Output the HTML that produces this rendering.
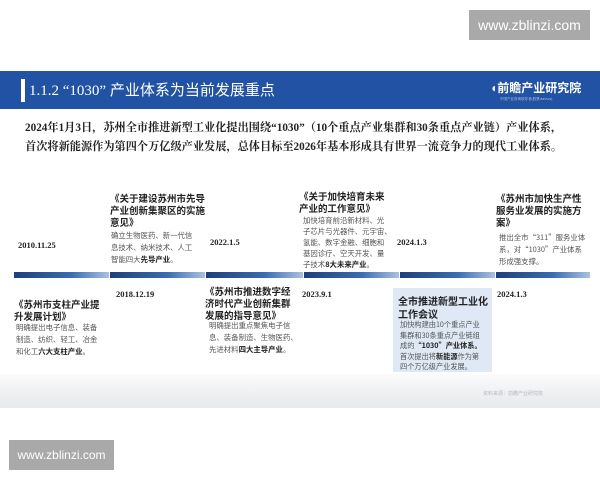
<!DOCTYPE html>
<html><head><meta charset="utf-8"><style>
body{margin:0;width:600px;height:480px;background:#fff;position:relative;overflow:hidden;font-family:"Liberation Serif","Noto Serif CJK SC","Noto Sans CJK SC",serif;color:#222}
.a{position:absolute;white-space:nowrap}
.wm{background:#a9a9a9;color:#fff;font-family:"Liberation Sans",sans-serif;font-size:14px;text-align:center;line-height:30px}
.hd{left:0;top:71px;width:600px;height:38px;background:#2152a3}
.t{font-size:9.5px;font-weight:bold;line-height:12px;font-family:"Noto Sans CJK SC",sans-serif;color:#222}
.d{font-size:7.4px;line-height:12px;color:#555;font-family:"Noto Sans CJK SC",sans-serif}
.d b{color:#222}
.dt{font-size:8.5px;font-weight:bold;color:#222}
.bar{top:272px;height:6px;background:linear-gradient(90deg,#1f3f7a,#3a6bb0 60%,#a8c2e2)}
</style></head><body>
<div class="a wm" style="left:469px;top:10px;width:121px;height:30px">www.zblinzi.com</div>
<div class="a hd"></div>
<div class="a" style="left:21px;top:79px;width:4px;height:23px;background:#fff"></div>
<div class="a" style="left:29px;top:80px;color:#fff;font-size:15px;line-height:22px;font-family:'Liberation Serif','Noto Sans CJK SC',serif">1.1.2 “1030” 产业体系为当前发展重点</div>
<div class="a" style="left:490px;top:80px;color:#fff;font-size:12px;font-weight:bold;font-family:'Noto Sans CJK SC',sans-serif;line-height:16px">◖前瞻产业研究院</div>
<div class="a" style="left:500px;top:97px;color:#cdd8ee;font-size:3.5px;">中国产业咨询领导者(股票:835519)</div>
<div class="a" style="left:25px;top:119px;font-size:11.2px;font-weight:bold;line-height:19px;font-family:'Liberation Serif','Noto Serif CJK SC',serif;color:#222">2024年1月3日，苏州全市推进新型工业化提出围绕“1030”（10个重点产业集群和30条重点产业链）产业体系，<br>首次将新能源作为第四个万亿级产业发展，总体目标至2026年基本形成具有世界一流竞争力的现代工业体系。</div>

<div class="a bar" style="left:14px;width:95px"></div>
<div class="a bar" style="left:110px;width:95px"></div>
<div class="a bar" style="left:206px;width:97px"></div>
<div class="a bar" style="left:304px;width:95px"></div>
<div class="a bar" style="left:400px;width:95px"></div>
<div class="a bar" style="left:496px;width:94px"></div>

<div class="a dt" style="left:18px;top:240px">2010.11.25</div>
<div class="a t" style="left:110px;top:192px">《关于建设苏州市先导<br>产业创新集聚区的实施<br>意见》</div>
<div class="a d" style="left:111px;top:230px">确立生物医药、新一代信<br>息技术、纳米技术、人工<br>智能四大<b>先导产业</b>。</div>
<div class="a dt" style="left:210px;top:237px">2022.1.5</div>
<div class="a t" style="left:299px;top:190px">《关于加快培育未来<br>产业的工作意见》</div>
<div class="a d" style="left:303px;top:215px;line-height:11px">加快培育前沿新材料、光<br>子芯片与光器件、元宇宙、<br>氢能、数字金融、细胞和<br>基因诊疗、空天开发、量<br>子技术<b>8大未来产业</b>。</div>
<div class="a dt" style="left:397px;top:237px">2024.1.3</div>
<div class="a t" style="left:496px;top:192px">《苏州市加快生产性<br>服务业发展的实施方<br>案》</div>
<div class="a d" style="left:499px;top:232px">推出全市“311”服务业体<br>系，对“1030”产业体系<br>形成强支撑。</div>

<div class="a t" style="left:14px;top:298px">《苏州市支柱产业提<br>升发展计划》</div>
<div class="a d" style="left:16px;top:322px">明确提出电子信息、装备<br>制造、纺织、轻工、冶金<br>和化工<b>六大支柱产业</b>。</div>
<div class="a dt" style="left:116px;top:289px">2018.12.19</div>
<div class="a t" style="left:205px;top:285px">《苏州市推进数字经<br>济时代产业创新集群<br>发展的指导意见》</div>
<div class="a d" style="left:209px;top:320px">明确提出重点聚焦电子信<br>息、装备制造、生物医药、<br>先进材料<b>四大主导产业</b>。</div>
<div class="a dt" style="left:302px;top:289px">2023.9.1</div>
<div class="a" style="left:393px;top:288px;width:99px;height:84px;background:#dfe9f5"></div>
<div class="a t" style="left:398px;top:295px;font-size:10px;line-height:12.5px">全市推进新型工业化<br>工作会议</div>
<div class="a d" style="left:400px;top:320px;font-size:7.2px;line-height:10.5px">加快构建由10个重点产业<br>集群和30条重点产业链组<br>成的<b>“1030”产业体系。</b><br>首次提出将<b>新能源</b>作为第<br>四个万亿级产业发展。</div>
<div class="a dt" style="left:497px;top:289px">2024.1.3</div>

<div class="a" style="left:0;top:374px;width:600px;height:34px;background:linear-gradient(#fbfbfc,#e6e8eb)"></div>
<div class="a" style="left:483px;top:390px;font-size:5px;color:#b5b8bd;font-family:'Noto Sans CJK SC',sans-serif">资料来源：前瞻产业研究院</div>
<div class="a wm" style="left:9px;top:440px;width:105px;height:30px;font-size:12px">www.zblinzi.com</div>
</body></html>
